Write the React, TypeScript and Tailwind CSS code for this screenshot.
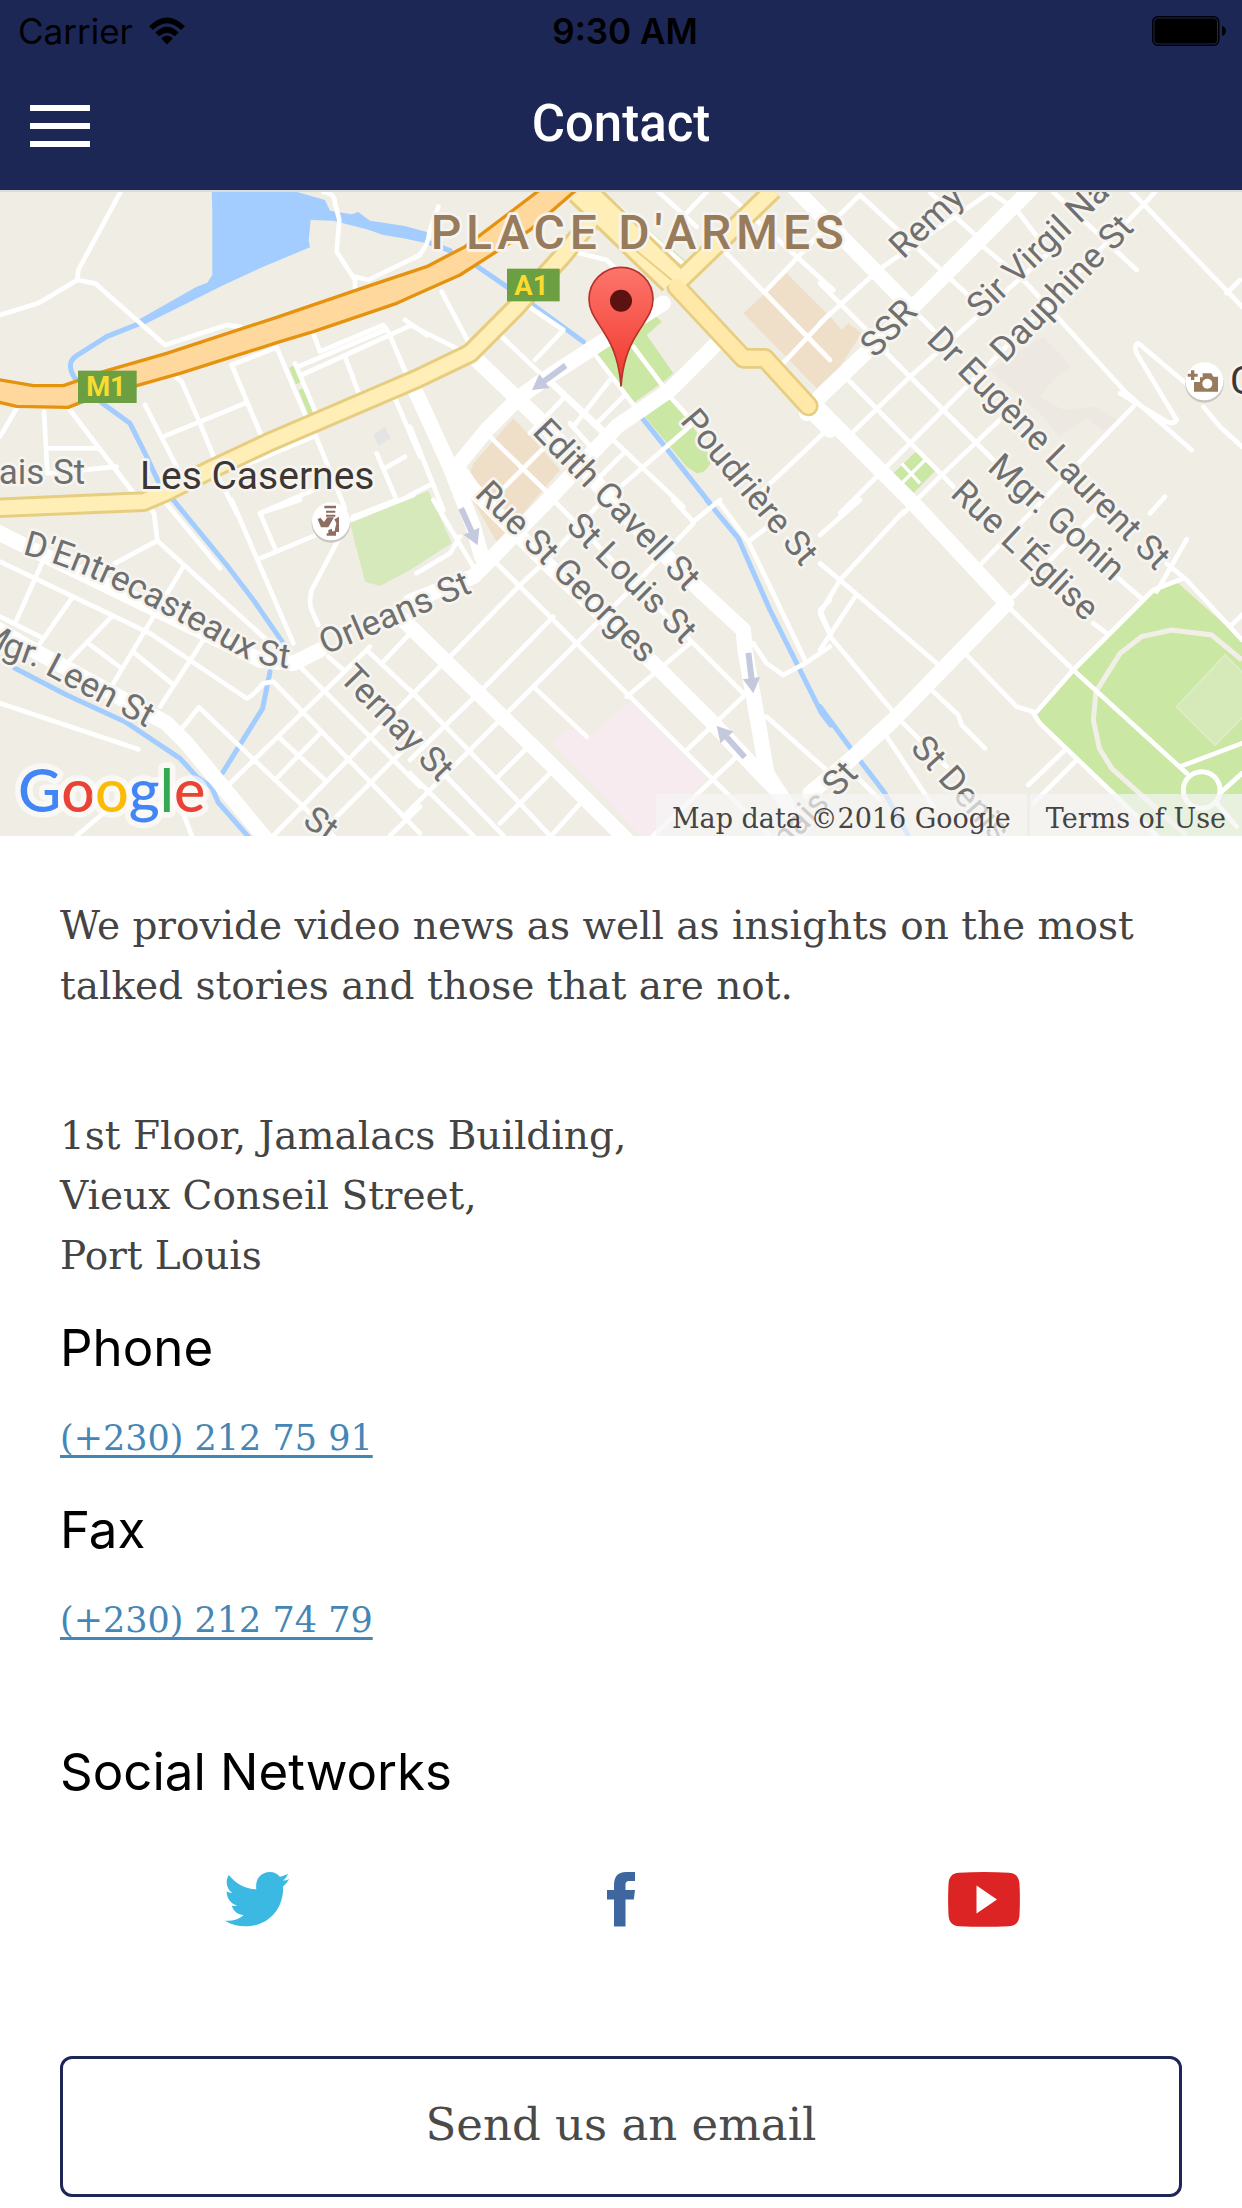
import React from "react";

type Tile = {
  x: number;
  y: number;
  minor: string[];
  major: string[];
  streams: string[];
};

const tiles: Tile[] = [
  {
    x: 0,
    y: 0,
    minor: [
      "M370 20L235 270L232 300L115 370L0 405M232 300L285 310L495 495L680 435L720 440",
      "M970 36Q1005 40 1005 70L1018 120L1010 215L1065 300V325M1065 290L1105 300L1260 225",
      "M50 685L0 770M132 695L142 880M145 805H295M210 690L405 945M435 675L535 870",
      "M525 590L545 605L600 730L645 840M490 770L740 668M695 555L830 502L920 715M695 555L785 770",
      "M940 460L960 515L1150 435L1165 455L1220 585M885 550L950 705M895 560L1155 450M905 585L1225 440M1215 420L1280 465",
      "M1035 530L1080 650M150 880L350 860M700 870L940 770M940 750L1035 985M1185 655L1260 830",
      "M1130 820L1190 960L1060 1010M1155 865L1215 830M650 880L710 1000M780 1000L940 930",
    ],
    major: [],
    streams: ["M420 430L320 470L230 527Q195 550 225 595L310 672L390 730L440 830L475 905L520 960"],
  },
  {
    x: 1230,
    y: 0,
    minor: [
      "M85 80L60 150Q50 225 0 240M95 335L180 495M0 435L150 510M350 375L460 450L375 540",
      "M270 465L600 780M430 610L580 750M600 600L490 740M465 650L360 760M640 650L560 730M560 530L690 700M670 500L760 620",
      "M490 215L590 240L620 270M590 50L830 260M740 30L860 140M890 36L790 140M940 30L1270 330M1260 130L1070 330",
      "M1260 400L1110 560M930 200L1260 540M780 650L880 760M850 730L620 930M610 780L820 980M640 820L560 900M480 730L560 820",
      "M1240 760L1060 930M0 740L100 990M0 945L60 915M245 775L420 945M430 775L280 925",
    ],
    major: [
      "M760 370L570 490L400 600L330 650L230 750L140 860L190 930",
      "M10 620L120 860L190 1040L215 1130",
      "M190 530L400 730",
      "M920 490L780 630L620 740L400 975L230 1150L190 1190L0 1265",
      "M1200 690L1260 750M1140 10L1290 165",
    ],
    streams: ["M50 185L120 212M200 258L290 320L365 372L520 485M695 712L765 800L900 970"],
  },
  {
    x: 2460,
    y: 0,
    minor: [
      "M120 45L460 360M330 36L400 105L460 160M490 200L620 310L920 640L1115 810M510 36L590 90L690 220M700 36L950 270M930 30L1266 380M1260 300L1220 340",
      "M120 45L-30 190M520 30L175 270L0 430M730 180L270 590L85 770M1010 30L970 75L500 560L190 870L60 1000",
      "M940 680L640 990M560 700L370 880L250 1000M190 510L520 840M85 600L400 920M0 310L200 510M280 390L340 450",
      "M1110 620L955 490Q940 495 950 520L1070 720Q1060 735 1040 725L900 640M1150 680L1200 740L1266 800M1035 950L990 1000",
    ],
    major: ["M630 30L280 380L0 650L-40 700", "M-20 670L290 980L560 1270L220 1620L90 1740L-30 1840", "M30 135L270 380"],
    streams: [],
  },
  {
    x: 0,
    y: 960,
    minor: [
      "M445 15L462 40L472 122L345 190M472 122L800 420M550 200L430 400L340 550M490 0L660 205M695 0L880 430",
      "M900 0L780 40L825 145M780 175L960 100M1050 60L1240 -15M1020 110L935 270Q925 310 935 330L955 375",
      "M0 185L450 400L740 595Q750 595 790 550L820 545L1260 1000M130 180L50 360M0 350L120 410M215 295L120 430M335 350L210 480",
      "M265 430L365 505M405 460L515 550M610 420L480 620M0 610L415 748M550 680L597 622L910 920L1000 1007",
      "M1110 440L690 850M890 490L1260 860M835 710L975 840M960 700L825 840M1230 400L1145 490M1100 450L1260 600",
      "M1240 580L820 1007M1260 700L1000 960M985 470L1030 510M310 940L230 1007M550 940L575 1007M1260 920L1170 1007",
    ],
    major: ["M-20 90L100 150L430 310L780 480L880 490L960 450", "M-20 380L100 450L500 670L560 730L800 1020"],
    streams: [
      "M520 0L680 195L760 300L850 430M810 515L788 625L715 742L668 818",
      "M45 505L200 585L375 665L540 775L590 830L635 862L655 908L745 1010",
    ],
  },
  {
    x: 1230,
    y: 960,
    minor: [
      "M255 185L500 430L900 830L1080 1007M430 0L850 430L1000 580M1070 650L1260 820",
      "M790 0L850 65L930 0M930 10L1015 125L1185 480M1015 125L1100 60M1260 440L1185 490L1120 525L1070 490L1030 430M1260 300L1230 330L1260 400",
      "M560 20L400 190L330 255L130 460L0 590M850 70L650 280L300 630L-20 950M430 350L230 555L0 780M840 430L650 590M1000 590L830 750M980 770L730 1007",
      "M370 560L530 710M0 570L330 910L420 1007M430 810L270 970M355 740L265 830M520 900L430 1000M0 820L190 1007M100 820L280 1007",
      "M20 220L120 160L150 110M70 0L190 200",
    ],
    major: [
      "M400 -230L640 40L870 270L1000 390L1005 450L1050 700L1070 820L1160 960",
      "M190 -30L430 210L740 500L900 660L1060 830L1110 880",
      "M-20 360L430 800L650 1020",
    ],
    streams: ["M890 0L985 115L1040 240L1080 330L1165 500L1235 640L1262 675"],
  },
  {
    x: 2460,
    y: 960,
    minor: [
      "M0 105L120 0M250 35L60 240L0 340L35 415L215 630M0 190L60 240L350 490M105 290L0 450M440 465L590 620L640 635",
      "M650 635L760 510L1000 270L1090 235M570 325L760 510L1100 820M480 195L640 30M580 290L840 30M890 230L970 300M820 370L860 400",
      "M1040 190L1100 240L1266 420M1010 275L1100 118M1266 345L1230 380M340 575L415 645L425 675L495 745M250 670L380 800",
      "M200 710L340 920M110 830L180 900M640 640L660 670L900 900L1010 1007M735 750L625 855M770 780L640 910M1080 800L1266 730M1266 820L1200 880M1190 910L1250 980",
    ],
    major: [],
    streams: ["M0 620L92 745L195 880L265 1007"],
  },
];

type Label = { text: string; x: number; y: number; angle: number };

const labels: Label[] = [
  { text: "ais St", x: -4, y: 911, angle: 0 },
  { text: "Edith Cavell St", x: 1594, y: 758, angle: 46 },
  { text: "Rue St Georges", x: 1421, y: 946, angle: 45 },
  { text: "St Louis St", x: 1694, y: 1042, angle: 45 },
  { text: "Poudrière St", x: 2038, y: 724, angle: 50 },
  { text: "Remy", x: 2710, y: 240, angle: -44 },
  { text: "SSR", x: 2625, y: 537, angle: -46 },
  { text: "Sir Virgil Na", x: 2942, y: 420, angle: -44 },
  { text: "Dauphine St", x: 3015, y: 552, angle: -46 },
  { text: "Dr Eugène Laurent St", x: 2776, y: 483, angle: 45 },
  { text: "Mgr. Gonin", x: 2959, y: 868, angle: 42 },
  { text: "Rue L'Église", x: 2848, y: 946, angle: 43 },
  { text: "St Denis", x: 2728, y: 1706, angle: 48 },
  { text: "Orleans St", x: 976, y: 1425, angle: -23 },
  { text: "Ternay St", x: 1014, y: 1496, angle: 46 },
  { text: "St", x: 904, y: 1932, angle: 35 },
];

function Roads({ kind, className }: { kind: "minor" | "major" | "streams"; className: string }) {
  return (
    <g className={className} fill="none" strokeLinejoin="round" strokeLinecap="round">
      {tiles.map((t) => (
        <path key={`${t.x}-${t.y}`} transform={`translate(${t.x} ${t.y})`} d={t[kind].join("")} />
      ))}
    </g>
  );
}

function Arrow({ x, y, angle, length }: { x: number; y: number; angle: number; length: number }) {
  return (
    <g transform={`translate(${x} ${y}) rotate(${angle})`} fill="#c5c9dd">
      <rect x={-length} y="-9" width={length - 40} height="18" />
      <path d="M0 0L-46 -26V26Z" />
    </g>
  );
}

function MapDrawing() {
  return (
    <svg
      viewBox="0 36 3726 1932"
      role="img"
      aria-label="Map of Place d'Armes, Port Louis"
      className="block h-auto w-full bg-[#f0ede5] font-['Roboto',sans-serif]"
    >
      <defs>
        <linearGradient id="pin" x1="0" y1="0" x2="0" y2="1">
          <stop offset="0" stopColor="#fc756b" />
          <stop offset="0.75" stopColor="#f4463c" />
          <stop offset="1" stopColor="#e83a31" />
        </linearGradient>
        <path id="entrecasteaux" d="M66 1122C260 1172 420 1262 560 1338C640 1380 690 1416 750 1442Q800 1462 940 1472" />
        <path id="leen" d="M-76 1376L20 1430L105 1460L150 1490L500 1675" />
      </defs>

      {/* Blocks, parks and buildings */}
      <path fill="#ede8e2" d="M3130 470L3215 560L3160 600L3120 650L3190 690L3290 680L3350 720L3310 755L3260 710L3180 770L3120 700L2970 570Z" />
      <path fill="#f0dfc8" d="M1540 715L1420 850L1395 920L1490 1085L1560 1010L1680 870L1620 800ZM2360 280L2500 420L2525 450L2545 430L2585 460L2520 560L2450 625L2230 400Z" />
      <path fill="#cae7a3" d="M1965 405L1985 425L1940 465L2020 580L1990 605L1900 670L1790 525L1870 460ZM2010 655L2060 710L2110 790L2135 840Q2120 880 2090 880L2060 860L1935 710ZM1845 65L2060 245L2045 265L1840 75Z" />
      <path fill="#cae7a3" d="M2750 812L2808 870L2735 945L2678 882ZM3535 1210L3726 1380V1968H3470L3120 1630L3108 1595L3220 1470L3465 1225Z" />
      <path fill="#d5eab8" stroke="#dcedc4" strokeWidth="6" d="M3675 1425L3740 1490V1600L3645 1695L3530 1580Z" />
      <path fill="#d5e9bb" d="M1050 1030L1285 932L1355 1090L1230 1170L1140 1218L1095 1205Z" />
      <path fill="#f8ebf0" d="M1890 1565L2120 1795L2030 1880V1968H1920L1655 1685L1710 1645L1770 1670Z" />
      <path fill="#e4e4e4" d="M1120 765L1155 740L1172 775L1135 798Z" />
      <path fill="none" stroke="#f2efe9" strokeWidth="15" d="M3726 1440L3635 1365L3515 1350L3425 1370L3360 1420L3288 1535L3280 1620L3298 1705L3335 1765L3560 1967" />
      <path fill="none" stroke="#cae7a3" strokeWidth="16" d="M875 560L895 610M903 628L932 700" />

      {/* Water */}
      <path
        fill="#a3ccff"
        d="M635 30H870L975 60L990 92L1055 103L1075 96L1110 122L1215 138L1280 156V190L1210 175L1150 165L1100 148L1000 122L932 120L926 180L930 202L790 260L665 318L430 435L405 425L590 320L622 308L637 285V100Z"
      />
      <Roads kind="streams" className="stroke-[#a3ccff] stroke-[15px]" />

      {/* Streets */}
      <Roads kind="minor" className="stroke-white stroke-[14px]" />
      <path fill="none" stroke="#fff" strokeWidth="10" d="M2775 840L2705 910M2705 850L2760 910" />
      <circle cx="3605" cy="1830" r="55" fill="#cae7a3" stroke="#fff" strokeWidth="15" />
      <Roads kind="major" className="stroke-white stroke-[46px]" />

      {/* Secondary roads */}
      <g fill="none" strokeLinejoin="round">
        <g stroke="#e6cd80">
          <path strokeWidth="62" d="M-20 984L430 965L490 940L640 865L800 790L940 730L1250 597L1410 520L1550 380L1690 225L1790 100" />
          <path strokeWidth="96" d="M1740 30L2020 300" />
          <path strokeWidth="62" strokeLinecap="round" d="M2030 320L2230 535H2295L2425 678" />
          <path strokeWidth="62" d="M2020 320L2320 30" />
        </g>
        <path stroke="#ffeeb5" strokeWidth="44" d="M-20 984L430 965L490 940L640 865L800 790L940 730L1250 597L1410 520L1550 380L1690 225L1790 100" />
        <path stroke="#ffeeb5" strokeWidth="78" d="M1740 30L2020 300" />
        <path stroke="#ffeeb5" strokeWidth="44" d="M2020 320L2320 30" />
        <path stroke="#ffe8a8" strokeWidth="46" strokeLinecap="round" d="M2030 320L2230 535H2295L2425 678" />
        <path stroke="#e6cd80" strokeWidth="5" d="M1900 205L2015 300" />
      </g>

      {/* Motorway */}
      <path
        fill="#ffd89d"
        stroke="#e5930f"
        strokeWidth="10"
        strokeLinejoin="round"
        d="M-20 596L100 617H190L320 572L500 520L830 412L1100 320L1280 260L1395 200L1632 20H1740L1590 150L1380 285L1260 338L1190 370L940 455L840 485L540 580L410 617L240 668L205 682L50 679L-20 663Z"
      />

      <Arrow x={1596} y={630} angle={144} length={125} />
      <Arrow x={1433} y={1096} angle={66} length={122} />
      <Arrow x={2260} y={1540} angle={83} length={122} />
      <Arrow x={2150} y={1638} angle={-132} length={126} />

      {/* Labels */}
      <g
        className="text-[105px]"
        fill="#6f6f6f"
        stroke="#f6f4ef"
        strokeWidth="16"
        strokeLinejoin="round"
        style={{ paintOrder: "stroke" }}
      >
        {labels.map((l) => (
          <text key={l.text + l.x} transform={`translate(${l.x} ${l.y}) rotate(${l.angle})`}>
            {l.text}
          </text>
        ))}
        <text textAnchor="end" transform="translate(2578 1785) rotate(-46)">
          Dumais St
        </text>
        <text>
          <textPath href="#entrecasteaux">D'Entrecasteaux St</textPath>
        </text>
        <text>
          <textPath href="#leen">Mgr. Leen St</textPath>
        </text>
        <text x="420" y="927" fill="#3e3633" className="text-[117px]">
          Les Casernes
        </text>
        <text x="3690" y="642" fill="#3e3633" className="text-[117px]">
          C
        </text>
        <text x="1292" y="207" fill="#987b5b" className="text-[144px] font-medium tracking-widest">
          PLACE D'ARMES
        </text>
      </g>

      <g className="text-[82px] font-bold" textAnchor="middle" fill="#fbdb30">
        <rect x="234" y="572" width="176" height="97" fill="#6b9f42" />
        <text x="318" y="649">M1</text>
        <rect x="1521" y="266" width="158" height="98" fill="#6b9f42" />
        <text x="1594" y="345">A1</text>
      </g>

      {/* Places of interest */}
      <circle cx="3613" cy="610" r="58" fill="#c9c6c0" />
      <circle cx="3613" cy="604" r="57" fill="#fff" />
      <path fill="#987b5b" d="M3573 571H3583V581H3593V590H3583V600H3573V590H3563V581H3573ZM3608 580H3634L3640 590H3654V635H3582V606H3600V592H3608Z" />
      <circle cx="3622" cy="611" r="15" fill="#fff" />
      <circle cx="993" cy="1030" r="58" fill="#c9c6c0" />
      <circle cx="993" cy="1024" r="57" fill="#fff" />
      <path
        fill="#8d6e63"
        d="M973 977H1008V985H973ZM978 992H1006V998H978ZM978 1004H1006V1010H978ZM953 1018L961 1013L972 1026L982 1012H1002L985 1042H963ZM1003 1018L1017 1010V1056H1003L1009 1030ZM985 1050L996 1046V1054H1008V1067H980V1060H985Z"
      />

      {/* Marker */}
      <path
        fill="url(#pin)"
        stroke="#b8332b"
        strokeWidth="5"
        d="M1863 619C1859 560 1843 505 1815 462C1790 420 1767 396 1767 358A96 96 0 0 1 1959 358C1959 396 1936 420 1911 462C1883 505 1867 560 1863 619Z"
      />
      <circle cx="1863" cy="362" r="33" fill="#5c1210" />

      <text
        x="54"
        y="1897"
        className="font-['Lato',sans-serif] text-[178px] font-medium"
        stroke="#fff"
        strokeOpacity="0.6"
        strokeWidth="34"
        strokeLinejoin="round"
        style={{ paintOrder: "stroke" }}
      >
        <tspan fill="#4285f4">G</tspan>
        <tspan fill="#ea4335">o</tspan>
        <tspan fill="#fbbc05">o</tspan>
        <tspan fill="#4285f4">g</tspan>
        <tspan fill="#34a853">l</tspan>
        <tspan fill="#ea4335">e</tspan>
      </text>
    </svg>
  );
}

function WifiIcon() {
  return (
    <svg viewBox="0 0 37 28" className="h-7 w-9" aria-label="Wi-Fi">
      <path d="M0 9Q18.500 -9 37 9L33 13Q18.500 -1 4 13ZM6.500 15.500Q18.500 4 30.500 15.500L26.500 19.500Q18.500 12 10.500 19.500ZM12.500 21.500Q18.500 16.500 24.500 21.500L18.500 28Z" />
    </svg>
  );
}

function BatteryIcon() {
  return (
    <svg viewBox="0 0 74 30" className="h-[30px] w-[74px]" aria-label="Battery full">
      <rect x="0.750" y="0.750" width="66" height="28.500" rx="5" fill="none" stroke="#000" strokeWidth="1.500" />
      <rect x="2.500" y="2.500" width="62.500" height="25" rx="3.500" />
      <path d="M70 10Q74 11 74 15T70 20Z" />
    </svg>
  );
}

const social = [
  {
    name: "Twitter",
    box: "0 0 65 55",
    size: "h-[55px] w-[65px] fill-[#3cb9e2]",
    d: "M3.800 3C10 11 20 17 31.300 17.300C30 8 35 0 45 0C49 0 52.500 2 54.900 4.700C58 4 60.500 3 63 1.700C62 4.500 60.500 6.500 58 8.500C60.300 8.500 62.300 8 64.300 7C62.500 10 60.500 12.300 58.100 14.300C59 36 44 54.300 20.300 54.300C13 54.300 6 52.300 0 48.700C7 49.300 13.500 47.500 18.600 43.200C13 43 8.500 39.500 6.600 33.600C8.500 34 10.500 34 12.300 33.400C6 32 1.600 26.500 1.600 19.200C3.400 20.200 5.300 20.800 7.200 20.800C1.500 17 0 9 3.800 3Z",
  },
  {
    name: "Facebook",
    box: "0 0 28 55",
    size: "h-[55px] w-7 fill-[#3e669f]",
    d: "M7 54.500V27.500H0V18H7V13.500C7 5 10.500 0 19 0H28V9H22.500C19 9 18.500 10.500 18.500 13.500V18H28L26.800 27.500H18.500V54.500Z",
  },
  {
    name: "YouTube",
    box: "0 0 72 55",
    size: "h-[55px] w-[72px] fill-[#dc2424]",
    d: "M11 .700Q36 -.500 61 .700C68 1 71 5 71.500 12Q72.300 27.500 71.500 43C71 50 68 53.800 61 54.200Q36 55.400 11 54.200C4 53.800 1 50 .500 43Q-.300 27.500 .500 12C1 5 4 1 11 .700ZM28.500 13.500V41.500L49 27.500Z",
  },
];

function Heading({ children }: { children: React.ReactNode }) {
  return <h2 className="font-['Inter',sans-serif] text-[51px] leading-[64px] text-black">{children}</h2>;
}

function NumberLink({ href, children }: { href: string; children: React.ReactNode }) {
  return (
    <a
      href={href}
      className="self-start text-[35px] leading-[60px] text-[#4686b5] underline decoration-[3px] underline-offset-[5px]"
    >
      {children}
    </a>
  );
}

export default function App() {
  return (
    <div className="flex min-h-screen flex-col bg-white font-['Roboto_Slab','DejaVu_Serif',serif] text-[#444444]">
      <header className="bg-[#1c2756]">
        <div className="grid h-[62px] grid-cols-3 items-center px-4 font-['Inter',sans-serif] text-[35px] text-black">
          <div className="flex items-center gap-4 pl-0.5">
            <span>Carrier</span>
            <WifiIcon />
          </div>
          <span className="pl-2 text-center font-semibold">9:30 AM</span>
          <div className="flex justify-end">
            <BatteryIcon />
          </div>
        </div>
        <div className="grid h-32 grid-cols-[60px_1fr_60px] items-center px-[30px]">
          <button type="button" aria-label="Menu" className="flex w-[60px] flex-col gap-3">
            <span className="h-1.5 w-full bg-white" />
            <span className="h-1.5 w-full bg-white" />
            <span className="h-1.5 w-full bg-white" />
          </button>
          <h1 className="pb-1 text-center font-['Roboto',sans-serif] text-[51px] leading-[60px] font-medium text-white">
            Contact
          </h1>
        </div>
      </header>

      <section className="relative border-t-2 border-[#dcdcdc]">
        <MapDrawing />
        <div className="absolute right-0 bottom-0 flex gap-[3px] text-[27px] leading-[34px] text-[#444444]">
          <span className="bg-[#f5f5f5]/70 px-4 pt-2">Map data ©2016 Google</span>
          <a href="#terms" className="bg-[#f5f5f5]/70 px-4 pt-2">
            Terms of Use
          </a>
        </div>
      </section>

      <main className="flex grow flex-col px-[60px] pt-[60px] pb-[11px] text-[39px] leading-[60px]">
        <p>We provide video news as well as insights on the most talked stories and those that are not.</p>
        <address className="mt-[90px] not-italic">
          1st Floor, Jamalacs Building,
          <br />
          Vieux Conseil Street,
          <br />
          Port Louis
        </address>

        <div className="mt-[30px] flex flex-col gap-7">
          <Heading>Phone</Heading>
          <NumberLink href="tel:+2302127591">(+230) 212 75 91</NumberLink>
        </div>
        <div className="mt-[30px] flex flex-col gap-7">
          <Heading>Fax</Heading>
          <NumberLink href="tel:+2302127479">(+230) 212 74 79</NumberLink>
        </div>

        <div className="mt-[90px]">
          <Heading>Social Networks</Heading>
        </div>
        <nav aria-label="Social networks" className="mx-4 mt-[68px] grid grid-cols-3 justify-items-center">
          {social.map((s) => (
            <a key={s.name} href={`#${s.name.toLowerCase()}`} aria-label={s.name}>
              <svg viewBox={s.box} className={s.size}>
                <path fillRule="evenodd" d={s.d} />
              </svg>
            </a>
          ))}
        </nav>

        <button
          type="button"
          className="mt-auto h-[141px] rounded-xl border-[3px] border-[#1c2756] bg-white pb-1 text-[45px] text-[#4a4a4a]"
        >
          Send us an email
        </button>
      </main>
    </div>
  );
}
